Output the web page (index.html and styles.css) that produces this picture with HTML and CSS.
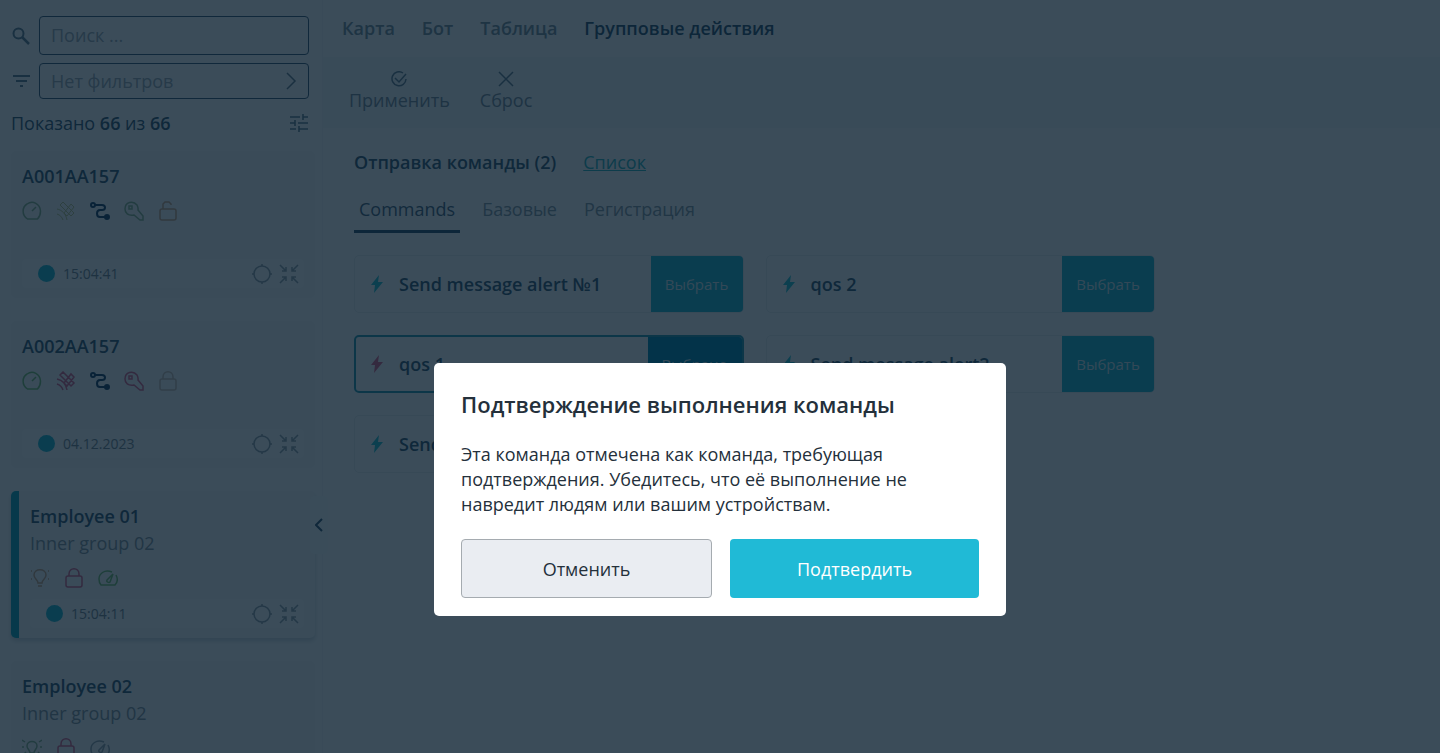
FILE: index.html
```html
<!DOCTYPE html>
<html lang="ru">
<head>
<meta charset="UTF-8">
<meta name="viewport" content="width=device-width, initial-scale=1.0">
<title>Групповые действия</title>
<link rel="stylesheet" href="styles.css">
</head>
<body>

<!-- shared icons -->
<svg class="sprite" aria-hidden="true">
    <symbol id="gauge" viewBox="0 0 20 20"><path d="M5.500 18C-.5 14 0 6 5 3c6-4 13 0 13.500 7 0 3-1 6-3 8zM10 10l4-4"/></symbol>
    <symbol id="satellite" viewBox="0 0 20 20"><path d="M4 4l3-3 11 11-3 3zM8 12l7-9 3 3-7 9zM1 8c5 1 9 5 10 11M1 13c3 1 5 3 6 6"/></symbol>
    <symbol id="route" viewBox="0 0 20 20"><circle cx="3" cy="4" r="2"/><path d="M5 4h7c4 0 4 5 0 5H10c-4 0-4 7 0 7h5"/><circle cx="17" cy="16" r="2" fill="currentColor"/></symbol>
    <symbol id="key" viewBox="0 0 20 20"><path d="M14 9l5 6v4h-3l-6-5C4 15 1 12 1 8 1 1 9-1 13 4c1 2 1.500 3 1 5z"/><rect x="5" y="5" width="3" height="3"/></symbol>
    <symbol id="lock" viewBox="0 0 20 20"><rect x="2" y="8" width="16" height="11" rx="2"/><path d="M5 8V6c0-7 10-7 10 0v2"/></symbol>
    <symbol id="unlock" viewBox="0 0 20 20"><rect x="2" y="8" width="16" height="11" rx="2"/><path d="M5 8V3l2-2h4l2 2v1"/></symbol>
    <symbol id="bulb" viewBox="0 0 20 20"><path d="M8 15c0-3-4-4-4-8 0-7 12-7 12 0 0 4-4 5-4 8zM8 18h4M1 3h1M18 3h1M1 11h1M18 11h1"/></symbol>
    <symbol id="bulb-on" viewBox="0 0 20 20"><path d="M8 15c0-3-3-4-3-7 0-6 10-6 10 0 0 3-3 4-3 7zM8 18h4M0 2l3 2M20 2l-3 2M0 9h2M18 9h2M1 17l3-3M19 17l-3-3"/></symbol>
    <symbol id="speed" viewBox="0 0 20 20"><path d="M14 4C6 1 1 6 1 11c0 3 1 5 2 6h14c2-2 3-6 1-10M9 12l6-6-3 8c-1 1-4 0-3-2z"/></symbol>
    <symbol id="target" viewBox="0 0 20 20"><circle cx="10" cy="10" r="8"/><path d="M10 0v2M10 18v2M0 10h2M18 10h2"/></symbol>
    <symbol id="shrink" viewBox="0 0 20 20"><path d="M1 1l6 6M7 3v4H3M19 1l-6 6M13 3v4h4M1 19l6-6M3 13h4v4M19 19l-6-6M17 13h-4v4"/></symbol>
    <symbol id="bolt" viewBox="0 0 12 18"><path d="M8 0L0 10h4L3 18 12 7H7z" fill="currentColor" stroke="none"/></symbol>
</svg>

<div class="app">
    <aside class="sidebar">
        <div class="filters">
            <label class="filter-row">
                <svg class="ico dark" viewBox="0 0 20 20"><circle cx="7.500" cy="7.500" r="5" stroke-width="2"/><path d="M11 11l7 7" stroke-width="2.500"/></svg>
                <input class="search" type="text" placeholder="Поиск ..." aria-label="Поиск">
            </label>
            <div class="filter-row">
                <svg class="ico dark" viewBox="0 0 20 20"><path d="M2 5h17M5 10h11M9 15h3" stroke-width="2"/></svg>
                <button class="filter-select" type="button">Нет фильтров
                    <svg class="chevron" viewBox="0 0 12 18"><path d="M2 1l8 8-8 8"/></svg>
                </button>
            </div>
        </div>
        <div class="count">
            <span>Показано <b>66</b> из <b>66</b></span>
            <svg class="ico dark" viewBox="0 0 20 20"><path d="M1 4h10M14 1v6M14 4h5M1 10h5M6 7v6M9 10h10M1 16h6M10 13v6M10 16h9" stroke-width="1.600"/></svg>
        </div>

        <div class="units">
            <article class="unit">
                <h3>A001AA157</h3>
                <div class="sensors">
                    <svg class="ico green"><use href="#gauge"/></svg>
                    <svg class="ico olive"><use href="#satellite"/></svg>
                    <svg class="ico navy"><use href="#route"/></svg>
                    <svg class="ico green"><use href="#key"/></svg>
                    <svg class="ico orange"><use href="#unlock"/></svg>
                </div>
                <div class="state">
                    <i class="dot"></i><time>15:04:41</time>
                    <svg class="ico"><use href="#target"/></svg>
                    <svg class="ico"><use href="#shrink"/></svg>
                </div>
            </article>

            <article class="unit">
                <h3>A002AA157</h3>
                <div class="sensors">
                    <svg class="ico lime"><use href="#gauge"/></svg>
                    <svg class="ico red"><use href="#satellite"/></svg>
                    <svg class="ico navy"><use href="#route"/></svg>
                    <svg class="ico red"><use href="#key"/></svg>
                    <svg class="ico pale"><use href="#lock"/></svg>
                </div>
                <div class="state">
                    <i class="dot"></i><time>04.12.2023</time>
                    <svg class="ico"><use href="#target"/></svg>
                    <svg class="ico"><use href="#shrink"/></svg>
                </div>
            </article>

            <article class="unit selected">
                <h3>Employee 01</h3>
                <p>Inner group 02</p>
                <div class="sensors">
                    <svg class="ico orange"><use href="#bulb"/></svg>
                    <svg class="ico red"><use href="#lock"/></svg>
                    <svg class="ico lime"><use href="#speed"/></svg>
                </div>
                <div class="state">
                    <i class="dot"></i><time>15:04:11</time>
                    <svg class="ico"><use href="#target"/></svg>
                    <svg class="ico"><use href="#shrink"/></svg>
                </div>
            </article>

            <article class="unit">
                <h3>Employee 02</h3>
                <p>Inner group 02</p>
                <div class="sensors">
                    <svg class="ico green"><use href="#bulb-on"/></svg>
                    <svg class="ico red"><use href="#lock"/></svg>
                    <svg class="ico"><use href="#speed"/></svg>
                </div>
            </article>
        </div>
        <button class="collapse" type="button" aria-label="Свернуть">
            <svg viewBox="0 0 8 14"><path d="M7 1L1 7l6 6"/></svg>
        </button>
    </aside>

    <main class="main">
        <nav class="nav">
            <a href="#">Карта</a>
            <a href="#">Бот</a>
            <a href="#">Таблица</a>
            <a href="#" class="active">Групповые действия</a>
        </nav>
        <div class="toolbar">
            <button type="button">
                <svg viewBox="0 0 16 16"><path d="M12 2a7 7 0 1 0 3 6M4 7l4 4 7-8"/></svg>
                Применить
            </button>
            <button type="button">
                <svg viewBox="0 0 16 16"><path d="M1 1l14 14M15 1L1 15"/></svg>
                Сброс
            </button>
        </div>
        <section class="content">
            <div class="heading">
                <h2>Отправка команды (2)</h2>
                <a href="#">Список</a>
            </div>
            <div class="tabs">
                <button type="button" class="active">Commands</button>
                <button type="button">Базовые</button>
                <button type="button">Регистрация</button>
            </div>
            <div class="commands">
                <div class="command">
                    <svg class="bolt"><use href="#bolt"/></svg>
                    <span>Send message alert №1</span>
                    <button type="button">Выбрать</button>
                </div>
                <div class="command">
                    <svg class="bolt"><use href="#bolt"/></svg>
                    <span>qos 2</span>
                    <button type="button">Выбрать</button>
                </div>
                <div class="command chosen">
                    <svg class="bolt"><use href="#bolt"/></svg>
                    <span>qos 1</span>
                    <button type="button">Выбрано</button>
                </div>
                <div class="command">
                    <svg class="bolt"><use href="#bolt"/></svg>
                    <span>Send message alert2</span>
                    <button type="button">Выбрать</button>
                </div>
                <div class="command">
                    <svg class="bolt"><use href="#bolt"/></svg>
                    <span>Send</span>
                    <button type="button" aria-label="Выбрать"></button>
                </div>
            </div>
        </section>
    </main>
</div>

<div class="overlay">
    <div class="modal" role="dialog" aria-labelledby="modal-title">
        <h1 id="modal-title">Подтверждение выполнения команды</h1>
        <p>Эта команда отмечена как команда, требующая подтверждения. Убедитесь, что её выполнение не навредит людям или вашим устройствам.</p>
        <div class="modal-buttons">
            <button type="button" class="cancel">Отменить</button>
            <button type="button" class="confirm">Подтвердить</button>
        </div>
    </div>
</div>
</body>
</html>
```
FILE: styles.css
```css
* {
    box-sizing: border-box;
}

body {
    margin: 0;
    font-family: "Open Sans", "Noto Sans", sans-serif;
    font-size: 18px;
    line-height: 24px;
    color: #3a5a74;
    background-color: #fff;
    overflow: hidden;
}

h1, h2, h3, p {
    margin: 0;
}

h2, h3 {
    font-size: 18px;
    font-weight: 600;
}

button, input {
    font: inherit;
    color: inherit;
}

button {
    cursor: pointer;
}

svg {
    fill: none;
    stroke: currentColor;
}

.sprite {
    display: none;
}

.app {
    display: flex;
    height: 100vh;
    overflow: hidden;
}

.ico {
    width: 20px;
    height: 20px;
    flex: none;
    color: #96a2ab;
    stroke-width: 1.5;
}

.ico.dark { color: #668091; }
.ico.navy { color: #1c4263; stroke-width: 2; }
.ico.green { color: #8fb58e; }
.ico.lime { color: #7cc172; }
.ico.olive { color: #c3ca8c; stroke-width: 1; }
.ico.orange { color: #d0a684; }
.ico.pale { color: #d0bfb3; }
.ico.red { color: #dc6388; }

/* Sidebar */

.sidebar {
    position: relative;
    width: 323px;
    flex: none;
    padding: 16px 7px 0 11px;
    border-right: 1px solid #f5f7f8;
}

.filters {
    display: flex;
    flex-direction: column;
    gap: 8px;
    padding-right: 6px;
}

.filter-row {
    display: flex;
    align-items: center;
    gap: 8px;
}

.search,
.filter-select {
    flex: 1;
    min-width: 0;
    height: 39px;
    padding: 0 11px 1px;
    border: 1px solid #3d5d75;
    border-radius: 4px;
    background: none;
}

.filter-select {
    display: flex;
    align-items: center;
    justify-content: space-between;
    height: 36px;
    color: #a2adb5;
}

.search::placeholder {
    color: #a2adb5;
    opacity: 1;
}

.chevron {
    width: 12px;
    height: 18px;
    color: #6b7f8d;
    stroke-width: 1.5;
}

.count {
    display: flex;
    align-items: center;
    justify-content: space-between;
    padding: 12px 6px 16px 0;
}

.count b {
    font-weight: 600;
}

.units {
    display: flex;
    flex-direction: column;
    gap: 23px;
}

.unit {
    display: flex;
    flex-direction: column;
    flex: none;
    height: 147px;
    padding: 13px 11px 10px;
    border-radius: 5px;
    background-color: #f8f9fa;
}

.unit.selected {
    border-left: 8px solid #12a9c0;
    box-shadow: 0 3px 5px #d3d9dd;
}

.unit p {
    padding-top: 3px;
    color: #8a969f;
}

.sensors {
    display: flex;
    gap: 14px;
    padding-top: 13px;
}

.state {
    display: flex;
    align-items: center;
    gap: 7px;
    height: 29px;
    margin-top: auto;
    padding: 0 5px 0 16px;
    border-radius: 4px;
    background-color: #fcfdfd;
    font-size: 14px;
    color: #7b8994;
}

.dot {
    width: 17px;
    height: 17px;
    border-radius: 50%;
    background-color: #20bad2;
}

.state time {
    flex: 1;
    padding-left: 1px;
}

.collapse {
    position: absolute;
    top: 496px;
    right: -6px;
    width: 18px;
    height: 58px;
    padding: 0 5px;
    border: none;
    border-radius: 4px;
    background-color: #fbfcfc;
}

.collapse svg {
    display: block;
    width: 8px;
    height: 14px;
    stroke-width: 2;
}

/* Main area */

.main {
    flex: 1;
    min-width: 0;
}

.nav {
    display: flex;
    gap: 27px;
    height: 57px;
    padding: 16px 19px;
    font-weight: 600;
}

.nav a {
    color: #7c909d;
    text-decoration: none;
}

.nav .active {
    color: #2f536f;
}

.toolbar {
    display: flex;
    gap: 30px;
    height: 71px;
    padding: 14px 26px;
    background-color: #f6f8f9;
}

.toolbar button {
    display: flex;
    flex-direction: column;
    align-items: center;
    gap: 1px;
    padding: 0;
    border: none;
    background: none;
    color: #7c8e9a;
}

.toolbar svg {
    width: 16px;
    height: 16px;
    stroke: #668091;
    stroke-width: 1.5;
}

.content {
    max-width: 863px;
    padding: 22px 31px;
}

.heading {
    display: flex;
    gap: 27px;
}

.heading a {
    color: #2fb4bd;
}

.tabs {
    display: flex;
    gap: 17px;
    padding-top: 22px;
}

.tabs button {
    height: 37px;
    padding: 0 5px 9px;
    border: none;
    border-bottom: 3px solid transparent;
    background: none;
    color: #8a99a3;
}

.tabs .active {
    border-bottom-color: #2f536f;
    color: #4a667c;
}

.commands {
    display: grid;
    grid-template-columns: 1fr 1fr;
    gap: 22px;
    padding-top: 22px;
}

.command {
    display: flex;
    align-items: center;
    height: 58px;
    padding-left: 16px;
    border: 1px solid #eceff1;
    border-radius: 5px;
    font-weight: 600;
    overflow: hidden;
}

.command span {
    flex: 1;
    padding-left: 16px;
}

.command button {
    align-self: stretch;
    width: 92px;
    padding: 0;
    border: none;
    background-color: #20bad2;
    font-size: 15px;
    font-weight: 400;
    color: #d8eef3;
}

.command.chosen {
    border: 2px solid #2c9ab3;
    padding-left: 15px;
}

.command.chosen button {
    width: 94px;
    background-color: #008cb4;
}

.bolt {
    width: 12px;
    height: 18px;
    color: #2ac5d0;
}

.chosen .bolt {
    color: #e0668a;
}

/* Confirmation dialog */

.overlay {
    position: fixed;
    inset: 0;
    display: flex;
    justify-content: center;
    align-items: flex-start;
    padding-top: 363px;
    background-color: rgba(4, 25, 42, 0.78);
}

.modal {
    width: 572px;
    padding: 26px 27px 18px;
    border-radius: 5px;
    background-color: #fff;
    color: #24303b;
}

.modal h1 {
    font-size: 22px;
    line-height: 30px;
    font-weight: 600;
}

.modal p {
    padding: 23px 0 22px;
    line-height: 25px;
}

.modal-buttons {
    display: flex;
    gap: 18px;
}

.modal-buttons button {
    flex: 1;
    height: 59px;
    border-radius: 4px;
}

.cancel {
    border: 1px solid #a5abb0;
    background-color: #eaedf2;
}

.confirm {
    border: none;
    background-color: #20bad6;
    color: #fff;
}
```
